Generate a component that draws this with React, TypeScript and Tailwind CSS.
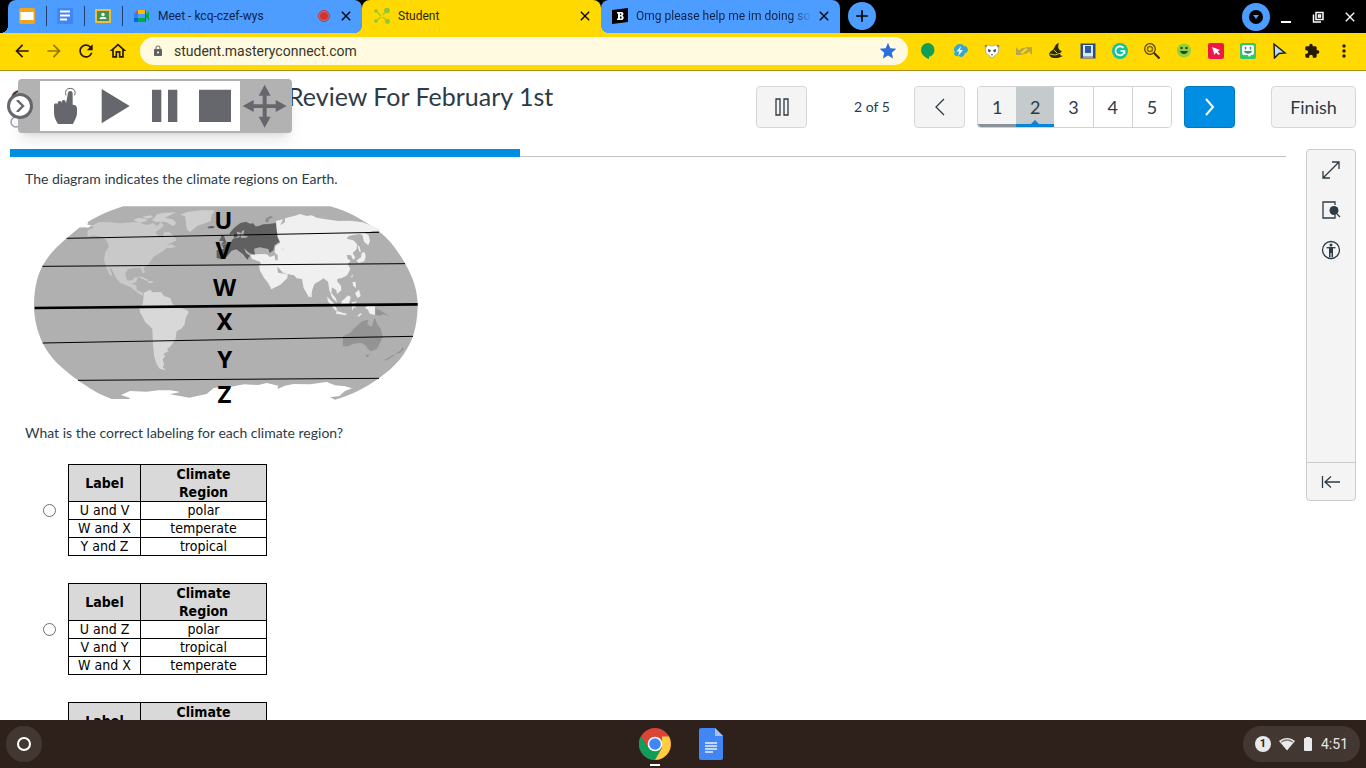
import React from "react";
import {
  MdAdd,
  MdArrowBack,
  MdArrowForward,
  MdClose,
  MdExtension,
  MdLock,
  MdMoreVert,
  MdOutlineHome,
  MdRefresh,
  MdStar,
} from "react-icons/md";

const DocLines = () => (
  <svg viewBox="0 0 16 16" className="size-4">
    <rect width="16" height="16" rx="1" fill="#4285f4" />
    <path d="M3 3.500h10M3 7.500h10M3 11.500h7" stroke="#fff" strokeWidth="2" />
  </svg>
);

const SlidesIcon = () => (
  <svg viewBox="0 0 16 16" className="size-4">
    <rect width="16" height="16" rx="2" fill="#f0a51e" />
    <rect x="1.500" y="4" width="13" height="8" fill="#fff" />
  </svg>
);

const ClassroomIcon = () => (
  <svg viewBox="0 0 16 16" className="size-4">
    <rect y="1" width="16" height="14" rx="1" fill="#f0bd3c" />
    <rect x="2" y="3" width="12" height="10" fill="#3f9455" />
    <circle cx="8" cy="6.500" r="1.700" fill="#fff" />
    <path d="M4.500 11c0-3 7-3 7 0z" fill="#fff" />
  </svg>
);

const MeetIcon = () => (
  <svg viewBox="0 0 16 16" className="size-4">
    <path d="M0 6l4-4v4z" fill="#ea4335" />
    <path d="M4 2h7v4H4z" fill="#fbbc04" />
    <path d="M0 6h4v4H0z" fill="#2684fc" />
    <path d="M0 10h4v4H1a1 1 0 0 1-1-1z" fill="#0066da" />
    <path d="M4 10h7v4H4zM11 8l4-5v10z" fill="#00ac47" />
    <path d="M11 2v12l1-1V3z" fill="#00832d" />
  </svg>
);

const MasteryIcon = () => (
  <svg viewBox="0 0 16 16" className="size-4">
    <path d="M3 4l4 4M12 3L9 7M3 12l4-3M9 9l4 4" stroke="#a9cb1f" strokeWidth="1.500" />
    <g fill="#8cc63f">
      <circle cx="2" cy="3" r="1.800" />
      <circle cx="13" cy="2.500" r="2.800" />
      <circle cx="2" cy="13" r="1.800" />
      <circle cx="13.500" cy="13.500" r="2.400" />
    </g>
  </svg>
);

const BrainlyIcon = () => (
  <svg viewBox="0 0 16 16" className="size-4">
    <path d="M0 2l16-2v14L0 16z" fill="#000" />
    <path
      d="M5 4h4.500c2.500 0 2.500 3.200.7 3.700 2.300.5 2 4.300-.9 4.300H5v-1.500h1v-5H5zM8 5.500v1.600h1.200V5.500zM8 8.500v2h1.500v-2z"
      fill="#fff"
      fillRule="evenodd"
    />
  </svg>
);

const extensions: { name: string; icon: React.ReactNode }[] = [
  {
    name: "Hangouts",
    icon: <path d="M8 0a7 7 0 0 1 1 13.800V16c-3-1-8-4-8-9a7 7 0 0 1 7-7z" fill="#0f9d58" />,
  },
  {
    name: "Flash",
    icon: (
      <>
        <path d="M4 3c2-3 7-2 8 0 5 0 5 7 1 7-1 4-4 5-6 3-4 1-6-2-4-4-2-2-1-5 1-6z" fill="#2fa8d5" />
        <path d="M9 3L4.500 8.500h3L6 13l5-6H8z" fill="#fff" />
      </>
    ),
  },
  {
    name: "Panda",
    icon: (
      <>
        <path d="M1 3l3-1 4 1 4-1 3 1-1 7-6 5-6-5z" fill="#fff" stroke="#999" strokeWidth=".7" />
        <path d="M1 2l2 .5L2 5zM15 2l-2 .5L14 5zM4 6l3 1-1 2.500-2-1zM12 6L9 7l1 2.500 2-1zM7 11h2l-1 2z" fill="#555" />
      </>
    ),
  },
  {
    name: "Swap",
    icon: <path d="M0 4v8h7l-2.500-2.500L10 5H6L3 7.500zM16 12V4H9l2.500 2.500L6 11h4l3-2.500z" fill="#b9a84a" />,
  },
  {
    name: "Squirrel",
    icon: (
      <>
        <path d="M11 0C5 2 8 6 3 8c-3 2-2 7 3 7h4l5-2c-4 0-3-3-1-5-3 0-5-4-3-8z" fill="#252b16" />
        <path d="M2 11l5 1 6-2M6 7l3 3" stroke="#d4bf22" fill="none" />
      </>
    ),
  },
  {
    name: "Reader",
    icon: (
      <>
        <rect x=".5" y=".5" width="15" height="15" fill="#2c4c85" />
        <rect x="3" y="2" width="10" height="11" fill="#d9e7f5" />
        <rect x="5" y="3" width="6" height="7" fill="#2d5ca0" />
        <path d="M3 14h10" stroke="#fff" />
      </>
    ),
  },
  {
    name: "Grammarly",
    icon: (
      <>
        <circle cx="8" cy="8" r="8" fill="#15c39a" />
        <path d="M11.500 5A4.500 4.500 0 1 0 12.500 8H8.500M12.500 8v3" stroke="#fff" strokeWidth="1.600" fill="none" />
      </>
    ),
  },
  {
    name: "Magnifier",
    icon: (
      <>
        <circle cx="6" cy="6" r="5.300" stroke="#51401a" fill="none" strokeWidth="1.200" />
        <circle cx="6" cy="6" r="2.500" stroke="#8c6b16" fill="none" strokeWidth="1.500" />
        <path d="M10 10l5.500 5.500" stroke="#3c2419" strokeWidth="2" />
      </>
    ),
  },
  {
    name: "Smile",
    icon: (
      <>
        <circle cx="8" cy="7.500" r="7" fill="#8fd142" />
        <circle cx="5.500" cy="5" r="1.200" fill="#29441e" />
        <circle cx="10.500" cy="5" r="1.200" fill="#29441e" />
        <path d="M4 8h8c-1 4-7 4-8 0z" fill="#29441e" />
      </>
    ),
  },
  {
    name: "Cursor",
    icon: (
      <>
        <rect width="16" height="16" rx="2" fill="#ed1846" />
        <path d="M4 4l8 3-2.500 1.200L12 11l-1.500 1L8 9.500 6.500 12z" fill="#fff" />
      </>
    ),
  },
  {
    name: "Bitmoji",
    icon: (
      <>
        <rect width="16" height="16" rx="2" fill="#35c66b" />
        <path d="M4 2h8q2 0 2 2v6q0 2-2 2h-1l-2 2-1-2H4q-2 0-2-2V4q0-2 2-2z" fill="#fff" />
        <path d="M5.500 4v2.500M10.500 4v2.500" stroke="#2c9a63" strokeWidth="1.500" />
        <path d="M4 8h8c-1 3.500-7 3.500-8 0z" fill="#2c9a63" />
      </>
    ),
  },
  {
    name: "Pointer",
    icon: <path d="M2 1l11 9-6 .5L2.500 15z" fill="#b6e1ee" stroke="#2a201a" strokeWidth="1.500" />,
  },
];

const labelBox = "flex items-center pb-px text-xs text-[#102347]";

const TabStrip = () => (
  <div className="flex h-[33px] shrink-0 items-stretch bg-black pl-2">
    <div className="relative flex w-[354px] rounded-t-lg bg-[#4c9dff] before:absolute before:bottom-0 before:-left-2 before:size-2 before:bg-[radial-gradient(circle_at_0_0,transparent_8px,#4c9dff_8px)]">
      {[<SlidesIcon />, <DocLines />, <ClassroomIcon />].map((icon, i) => (
        <button
          key={i}
          aria-label={["Slides", "Docs", "Classroom"][i]}
          className="flex w-[38px] items-center justify-center pb-px"
        >
          {icon}
          <span className="absolute h-5 w-px translate-x-[19px] bg-[#1f3f6b]" />
        </button>
      ))}
      <div className={`${labelBox} flex-1 pr-2 pl-3`}>
        <MeetIcon />
        <span className="ml-2 flex-1 whitespace-nowrap">Meet - kcq-czef-wys</span>
        <span className="mr-2 flex size-3 items-center justify-center rounded-full border border-[#d93025] bg-[#8f7fb5]">
          <span className="size-2 rounded-full bg-[#d93025]" />
        </span>
        <button aria-label="Close Meet">
          <MdClose className="size-4 text-black" />
        </button>
      </div>
    </div>
    <div className="relative z-10 flex w-[239px] items-center rounded-t-lg bg-[#ffd900] pr-2 pb-px pl-3 text-xs text-[#2c2410] before:absolute before:bottom-0 before:-left-2 before:size-2 before:bg-[radial-gradient(circle_at_0_0,transparent_8px,#ffd900_8px)] after:absolute after:-right-2 after:bottom-0 after:size-2 after:bg-[radial-gradient(circle_at_100%_0,transparent_8px,#ffd900_8px)]">
      <MasteryIcon />
      <span className="ml-2 flex-1">Student</span>
      <button aria-label="Close Student">
        <MdClose className="size-4 text-black" />
      </button>
    </div>
    <div className={`${labelBox} w-[239px] rounded-t-lg bg-[#4c9dff] pr-2 pl-[11px]`}>
      <BrainlyIcon />
      <span className="ml-2 w-44 overflow-hidden bg-[linear-gradient(90deg,#102347_88%,transparent)] bg-clip-text whitespace-nowrap text-transparent">
        Omg please help me im doing so
      </span>
      <button aria-label="Close Omg please help me" className="ml-auto">
        <MdClose className="size-4 text-black" />
      </button>
    </div>
    <button
      aria-label="New tab"
      className="mt-[2px] ml-2 flex size-7 items-center justify-center rounded-full bg-[#4c9dff]"
    >
      <MdAdd className="size-5 text-black" />
    </button>
    <div className="ml-auto flex items-center gap-4 pr-2 text-white">
      <button
        aria-label="Search tabs"
        className="-mr-2 flex size-7 items-center justify-center rounded-full bg-[#4c9dff]"
      >
        <svg viewBox="0 0 16 16" className="size-4">
          <circle cx="8" cy="8" r="7" />
          <path d="M5 6h6l-3 4z" fill="#4c9dff" />
        </svg>
      </button>
      <button aria-label="Minimize">
        <svg viewBox="0 0 16 16" className="size-4">
          <path d="M3 13h10" stroke="#fff" strokeWidth="2" />
        </svg>
      </button>
      <button aria-label="Restore">
        <svg viewBox="0 0 16 16" className="size-4" fill="none" stroke="#fff" strokeWidth="1.500">
          <path d="M6 3.500h7v7H6zM3.500 5.500v7.500H11M8.500 6h2v2h-2z" />
        </svg>
      </button>
      <button aria-label="Close window">
        <MdClose className="size-4" />
      </button>
    </div>
  </div>
);

const AddressBar = () => (
  <div className="flex h-[38px] shrink-0 items-center border-b border-[#a89120] bg-[#ffd900] px-3 pb-px text-[#261a05]">
    <div className="flex gap-3 pr-3">
      <button aria-label="Back"><MdArrowBack className="size-5" /></button>
      <button aria-label="Forward"><MdArrowForward className="size-5 opacity-50" /></button>
      <button aria-label="Reload"><MdRefresh className="size-5" /></button>
      <button aria-label="Home"><MdOutlineHome className="size-5" /></button>
    </div>
    <div className="flex h-7 flex-1 items-center rounded-full bg-[#fffae0] pr-2.5 pl-3">
      <MdLock className="size-3 text-[#5f6368]" />
      <input
        aria-label="Address"
        defaultValue="student.masteryconnect.com"
        className="ml-2.5 flex-1 bg-transparent text-sm text-[#3a3525] outline-none"
      />
      <button aria-label="Bookmark"><MdStar className="size-5 text-[#2a6fdb]" /></button>
    </div>
    <div className="flex items-center gap-4 pl-3">
      {extensions.map((ext) => (
        <button key={ext.name} aria-label={ext.name}>
          <svg viewBox="0 0 16 16" className="size-4">{ext.icon}</svg>
        </button>
      ))}
      <button aria-label="Extensions"><MdExtension className="size-4" /></button>
      <button aria-label="Menu" className="-ml-0.5"><MdMoreVert className="size-5" /></button>
    </div>
  </div>
);

const SpeechToolbar = () => (
  <div className="absolute top-2 left-[18px] z-20 flex h-[54px] rounded bg-[#b2b2b2] py-[2px] text-[#66676d] shadow-lg">
    <button
      aria-label="Collapse toolbar"
      className="absolute top-[14px] -left-[11px] flex size-[26px] items-center justify-center rounded-full border-[3px] border-[#66676d] bg-white"
    >
      <svg viewBox="0 0 12 12" className="size-3" fill="none" stroke="currentColor" strokeWidth="2.400">
        <path d="M3 0l6 6-6 6" />
      </svg>
    </button>
    <div className="ml-[22px] flex items-center bg-white">
      <button aria-label="Click to speak">
        <svg viewBox="120 33 150 150" className="size-[50px]" fill="currentColor">
          <path d="M204 70q0-7 7-7t7 7v34q13 0 13 12v10c0 16-6 22-12 36h-45c-7-12-12-22-12-34v-22q0-6 6-6t5 5v-5q0-7 6-7t6 7v-3q0-7 6-7t6 6l1 4z" />
          <path
            d="M198 76q-6-20 13-21 19 1 13 21"
            fill="none"
            stroke="currentColor"
            strokeWidth="3"
          />
        </svg>
      </button>
      <button aria-label="Play">
        <svg viewBox="270 33 150 150" className="size-[50px]" fill="currentColor">
          <path d="M305 57l84 51-84 52z" />
        </svg>
      </button>
      <button aria-label="Pause speech">
        <svg viewBox="420 33 150 150" className="size-[50px]" fill="currentColor">
          <path d="M456 59h28v97h-28zM504 59h28v97h-28z" />
        </svg>
      </button>
      <button aria-label="Stop">
        <svg viewBox="570 33 150 150" className="size-[50px]" fill="currentColor">
          <path d="M597 59h96v97h-96z" />
        </svg>
      </button>
    </div>
    <button aria-label="Move toolbar">
      <svg viewBox="720 33 156 150" className="h-[50px] w-[52px]" fill="currentColor">
        <path d="M794 44l18 33h-12v26h27V90l33 18-33 18v-12h-27v26h12l-18 33-18-33h12v-26h-27v12l-33-18 33-18v13h27V77h-12z" />
      </svg>
    </button>
  </div>
);

const navButton =
  "flex h-[42px] w-[51px] items-center justify-center rounded border border-[#d5d7d9] bg-[#f4f4f4]";

const TestHeader = () => (
  <header className="flex h-[78px] items-start px-2.5 pt-[15px] text-[#2d3b45]">
    <div className="w-[278px] text-[25px] leading-6">
      G
      <svg viewBox="0 0 12 12" className="mt-1.5 size-3" fill="none" stroke="#9aa3a9" strokeWidth="1.500">
        <circle cx="6" cy="6" r="5" />
      </svg>
    </div>
    <h1 className="-mt-0.5 text-[25px] leading-6">Review For February 1st</h1>
    <div className="ml-auto flex items-center">
      <button aria-label="Pause test" className={navButton}>
        <svg viewBox="0 0 14 18" className="h-[18px] w-3.5" fill="none" stroke="currentColor" strokeWidth="1.300">
          <path d="M1 1h4v16H1zM9 1h4v16H9z" />
        </svg>
      </button>
      <span className="w-[107px] pl-[47px] text-sm whitespace-nowrap">2 of 5</span>
      <button aria-label="Previous question" className={navButton}>
        <svg viewBox="0 0 10 18" className="h-[18px] w-2.5" fill="none" stroke="currentColor" strokeWidth="1.300">
          <path d="M9 1L1 9l8 8" />
        </svg>
      </button>
      <nav className="ml-3 flex h-[42px] w-[195px] overflow-hidden rounded border border-[#d0d3d6] text-lg">
        {[1, 2, 3, 4, 5].map((n) => (
          <button
            key={n}
            className={
              n === 1
                ? "flex-1 border-b-[3px] border-[#8b929b] bg-[#f4f4f4] pt-[2px]"
                : n === 2
                  ? "relative flex-1 border-b-[3px] border-[#0a84d6] bg-[#c5cacd] pt-[2px]"
                  : "flex-1 border-r border-[#d0d3d6] bg-white last:border-r-0"
            }
          >
            {n}
            {n === 2 && (
              <svg viewBox="0 0 8 4" className="absolute bottom-0 left-[15px] h-1 w-2">
                <path d="M0 4l4-4 4 4z" fill="#0a84d6" />
              </svg>
            )}
          </button>
        ))}
      </nav>
      <button
        aria-label="Next question"
        className="ml-3 flex h-[42px] w-[51px] items-center justify-center rounded border border-[#0079c4] bg-[#008ee2] text-white"
      >
        <svg viewBox="0 0 10 18" className="h-[18px] w-2.5" fill="none" stroke="currentColor" strokeWidth="2">
          <path d="M1 1l7 8-7 8" />
        </svg>
      </button>
      <button className="ml-9 h-[42px] w-[85px] rounded border border-[#d5d7d9] bg-[#f4f4f4] text-lg">
        Finish
      </button>
    </div>
  </header>
);

const mapLabels = [
  { text: "U", x: 610, y: 102 },
  { text: "V", x: 610, y: 192 },
  { text: "W", x: 614, y: 303 },
  { text: "X", x: 614, y: 404 },
  { text: "Y", x: 614, y: 518 },
  { text: "Z", x: 613, y: 623 },
];

const WorldMap = () => (
  <svg viewBox="15 9 1200 636" className="w-[400px] max-w-full" role="img" aria-label="Climate regions">
    {/* ocean, cut away along the Antarctic coast */}
    <path
      d="M310 34H930C985 48 1030 76 1076 108C1110 134 1135 170 1155 205C1180 250 1192 285 1193 328C1193 365 1188 395 1179 424C1158 480 1125 515 1077 550C1035 580 990 602 945 614L930 607 958 603 975 588 996 580 975 574 945 571 920 561 870 568 820 567 795 572 772 582 775 572 740 564 715 570 672 568 630 576 605 576 580 580 560 597 535 602 508 608 480 603 450 598 478 592 470 580 455 575 466 558 472 572 483 580 478 590 450 586 415 586 380 590 330 588 303 600 328 608 330 612H275C235 598 205 578 174 556C125 520 90 490 68 444C50 405 43 370 42 335C42 292 48 250 67 214C85 180 110 155 140 130C160 112 175 100 198 84C235 62 270 46 310 34Z"
      fill="#b0b0b0"
    />
    <path d="M180 98L190 88 205 80 202 89 215 91 205 98 190 97z" fill="#fff" />
    {/* North America, Arctic islands and Greenland */}
    <path
      d="M203 106L222 98 213 93 238 81 270 82 300 85 350 81 382 90 400 84 410 94 422 82 432 91 420 102 406 112 415 124 428 128 432 112 448 111 466 128 470 137 452 144 440 150 455 148 468 155 452 160 440 158 427 170 412 178 398 188 390 202 378 214 370 220 375 232 368 235 362 218 340 219 323 223 315 238 322 256 337 256 344 247 354 247 348 261 335 266 349 271 350 285 369 293 368 303 343 286 332 277 300 263 287 247 275 222 268 217 277 243 269 240 258 216 252 195 256 171 267 153 258 134 245 125 220 121 202 125z"
      fill="#c9c9c9"
    />
    <path
      d="M495 63L480 60 502 51 540 46 585 46 575 61 572 78 552 86 532 92 510 112 500 101zM340 75l15-7 22 3 5 7-24 5zM367 65l25-4 8 5-19 5zM400 72l12-15 22-4 35-1-17 8-18 8 23 5 12 10-8 11-25-14-19 1-8-5zM395 74l15-7 14 6-15 9z"
      fill="#cecece"
    />
    <path d="M353 244l15 3 16 8-2 3-18-8zM385 258l16 1-5 4h-12z" fill="#d2d2d2" />
    {/* South America */}
    <path
      d="M372 293L382 288 391 284 397 292 423 291 432 303 451 309 458 328 475 337 501 345 506 352 497 368 494 388 486 400 470 409 466 434 449 457 441 461 446 468 431 476 435 484 428 493 432 506 429 517 438 526 420 522 410 508 403 486 399 451 397 401 376 382 360 351 358 339 368 328z"
      fill="#d8d8d8"
    />
    {/* Europe */}
    <path
      d="M630 113L642 99 661 84 678 80 690 86 700 85 706 94 714 94 730 88 747 87 768 84 770 107 774 128 781 139 764 150 760 166 749 174 745 162 719 157 702 161 705 180 688 174 672 160 678 174 690 182 682 194 669 178 649 163 635 167 620 185 603 193 590 189 590 166 611 162 606 150 631 144 639 131 658 127 663 113 651 110 652 125 643 130 640 116 629 119zM597 137L604 126 600 120 612 122 620 145 602 150 611 138zM589 145l8-3 3 8-10 5zM562 96l13-3 10 2-6 5h-14z"
      fill="#606060"
    />
    <path d="M661 119l6-12 6-2-3 16 14 2-5 5-16 1z" fill="#b0b0b0" />
    {/* Asia */}
    <path
      d="M768 78L790 73 780 91 795 82 795 70 825 62 840 57 860 63 875 61 890 68 913 72 955 78 990 77 1028 82 1058 94 1076 101 1084 107 1060 108 1035 114 1045 119 1050 137 1045 151 1032 140 1027 120 1018 117 1001 120 986 123 980 131 1000 136 1011 147 1010 162 998 174 1006 188 999 194 993 181 980 180 983 191 992 198 983 207 991 221 982 240 968 248 952 252 952 260 963 272 964 286 951 297 949 286 936 277 934 293 947 309 952 323 937 309 928 286 924 260 911 250 897 259 883 267 876 288 874 303 867 307 851 279 846 252 830 250 822 241 802 237 789 233 777 220 772 216 774 233 803 238 802 249 781 269 754 283 745 265 732 248 720 227 717 212 723 207 720 200 696 192 691 180 720 177 740 178 750 186 764 181 766 196 773 196 773 180 764 173 766 153 781 143 773 127z"
      fill="#f0f0f0"
    />
    <path d="M745 84l-10-5 3-9 14-7 8 3-14 7z" fill="#8a8a8a" />
    {/* Japan and the south-east Asian islands */}
    <path
      d="M1017 204l-8-7 14-10 2-14 10-1 2 14-4 13zM1012 151l6 3 5 17-5-1zM993 248l4-12 1 9zM997 262l10-2 1 19-8-6zM1005 294l12-10 5 19-9 6zM966 318l19-17 7 5-5 20-16 8-8-9zM921 305l20 19 12 23-8-1-21-27zM950 348l29 8v5l-31-5zM995 322l17-3-10 9 8 12-8-3-6 10zM1012 363l9-8 5 2-10 8zM1045 330l20 3v27l-16-4-5-12-9-5z"
      fill="#f0f0f0"
    />
    <path d="M870 292l6 7v8l-6-3zM780 164l8-6 7 3-5 7z" fill="#e5e5e5" />
    {/* Australia, New Guinea and New Zealand */}
    <path
      d="M969 424L991 413 1003 399 1013 391 1026 379 1045 374 1042 388 1055 395 1064 367 1073 390 1083 403 1088 425 1081 442 1071 462 1053 469 1043 462 1038 452 1022 443 998 447 986 454 968 454zM1035 479h15l-8 8zM1066 340l15 6 10 7 20 10-22-5-9 4-14-2zM1143 465l3-7 7 3-12 12-17 5zM1093 495l26-15 8-1-30 18z"
      fill="#949494"
    />
    <g stroke="#000" strokeWidth="3">
      <path d="M140 130L1077 112" />
      <path d="M67 214L1155 206" />
      <path d="M44 339L1193 328" strokeWidth="8" />
      <path d="M68 444L1179 424" />
      <path d="M174 556L1077 550" />
    </g>
    {mapLabels.map((l) => (
      <text
        key={l.text}
        x={l.x}
        y={l.y}
        textAnchor="middle"
        className="font-['Noto_Sans',sans-serif] text-[72px] font-bold"
      >
        {l.text}
      </text>
    ))}
  </svg>
);

const options = [
  [
    ["U and V", "polar"],
    ["W and X", "temperate"],
    ["Y and Z", "tropical"],
  ],
  [
    ["U and Z", "polar"],
    ["V and Y", "tropical"],
    ["W and X", "temperate"],
  ],
  [
    ["U and Z", "tropical"],
    ["V and Y", "temperate"],
    ["W and X", "polar"],
  ],
];

const Option = ({ rows, index }: { rows: string[][]; index: number }) => (
  <label className="flex items-center gap-3">
    <input
      type="radio"
      name="answer"
      aria-label={`Option ${index + 1}`}
      className="size-[13px] appearance-none rounded-full border border-[#6f6f6f] bg-white checked:border-4"
    />
    <table className="w-[199px] table-fixed border-collapse bg-white text-center font-['DejaVu_Sans_Condensed','DejaVu_Sans',sans-serif] text-sm leading-[17px] text-black">
      <thead>
        <tr className="bg-[#d9d9d9] leading-[18px]">
          <th className="w-[72px] border border-black p-0">Label</th>
          <th className="border border-black px-6 py-0">Climate Region</th>
        </tr>
      </thead>
      <tbody>
        {rows.map(([label, region]) => (
          <tr key={label}>
            <td className="border border-black p-0">{label}</td>
            <td className="border border-black p-0">{region}</td>
          </tr>
        ))}
      </tbody>
    </table>
  </label>
);

const ToolPanel = () => (
  <aside className="mr-2.5 flex h-[352px] w-[50px] shrink-0 flex-col items-center rounded border border-[#c7cdd1] bg-[#f4f4f4] text-[#2d3b45]">
    <div className="flex flex-1 flex-col gap-5 pt-2.5">
      <button aria-label="Full screen">
        <svg viewBox="0 0 20 20" className="size-5" fill="none" stroke="currentColor" strokeWidth="1.300">
          <path d="M2 18L18 2M11 2h7v7M2 11v7h7" />
        </svg>
      </button>
      <button aria-label="Zoom">
        <svg viewBox="0 0 20 20" className="size-5" fill="none" stroke="currentColor" strokeWidth="1.300">
          <path d="M14 5V2H2v16h12v-3M16 14l3 3" />
          <circle cx="13" cy="10.500" r="4.500" fill="currentColor" stroke="none" />
        </svg>
      </button>
      <button aria-label="Accessibility">
        <svg viewBox="0 0 20 20" className="size-5" fill="none" stroke="currentColor" strokeWidth="1.300">
          <circle cx="10" cy="10" r="8.500" />
          <circle cx="10" cy="5" r="1.500" fill="currentColor" stroke="none" />
          <path d="M5.500 7.700h9" />
          <path d="M8 7.500h4V17h-1.500v-4h-1v4H8z" fill="currentColor" stroke="none" />
        </svg>
      </button>
    </div>
    <button
      aria-label="Collapse panel"
      className="flex h-[38px] w-full items-center justify-center border-t border-[#c7cdd1]"
    >
      <svg viewBox="0 0 20 14" className="h-3.5 w-5" fill="none" stroke="currentColor" strokeWidth="1.300">
        <path d="M1.500 1v12M19 7H4M10 1.500L4 7l6 5.500" />
      </svg>
    </button>
  </aside>
);

const Shelf = () => (
  <footer className="relative z-20 flex h-12 shrink-0 items-center justify-between bg-[#2e211b] px-1.5 font-[Roboto,sans-serif]">
    <div className="flex flex-1">
      <button
        aria-label="Launcher"
        className="flex size-9 items-center justify-center rounded-full bg-[#433731]"
      >
        <span className="size-3.5 rounded-full border-2 border-white" />
      </button>
    </div>
    <div className="flex items-center gap-6">
      <button aria-label="Chrome" className="relative">
        <svg viewBox="0 0 32 32" className="size-8">
          <circle cx="16" cy="16" r="16" fill="#db4437" />
          <path d="M2.100 8A16 16 0 0 0 16 32l7-12-7-4-7 4z" fill="#109d58" />
          <path d="M30 8.500A16 16 0 0 1 16 32l7-12V8.500z" fill="#ffcd40" />
          <circle cx="16" cy="16" r="7.300" fill="#fff" />
          <circle cx="16" cy="16" r="5.800" fill="#4285f4" />
        </svg>
        <span className="absolute -bottom-[6px] left-[11px] h-[2px] w-2.5 bg-white" />
      </button>
      <button aria-label="Docs">
        <svg viewBox="0 0 32 32" className="size-8">
          <path d="M6 0h14l8 8v22a2 2 0 0 1-2 2H6a2 2 0 0 1-2-2V2a2 2 0 0 1 2-2z" fill="#4285f4" />
          <path d="M20 0l8 8h-8z" fill="#a1c2fa" />
          <path d="M10 15h12M10 18h12M10 21h12M10 24h8" stroke="#f1f1f1" strokeWidth="1.500" />
        </svg>
      </button>
    </div>
    <div className="flex flex-1 justify-end">
      <button className="flex h-9 items-center gap-2 rounded-full bg-[#433731] px-3 text-sm text-[#e8e6e5]">
        <span className="flex size-4 items-center justify-center rounded-full bg-[#e8eaed] text-[11px] font-bold text-[#2e211b]">
          1
        </span>
        <svg viewBox="0 0 16 14" className="h-3.5 w-4">
          <path d="M8 13.500L0 4c5-4 11-4 16 0z" fill="#e8eaed" />
          <path d="M2.200 5c3.600-2.500 8-2.500 11.600 0" stroke="#7d746f" strokeWidth="1.400" fill="none" />
        </svg>
        <svg viewBox="3 0 10 16" className="h-4 w-2.5 shrink-0" fill="#e8eaed">
          <path d="M4 3q0-1 1-1h1V1h4v1h1q1 0 1 1v11q0 1-1 1H5q-1 0-1-1z" />
        </svg>
        4:51
      </button>
    </div>
  </footer>
);

const App: React.FC = () => {
  return (
    <div className="flex h-screen flex-col overflow-hidden bg-white font-[Roboto,sans-serif]">
      <TabStrip />
      <AddressBar />
      <div className="relative flex min-h-0 flex-1 flex-col font-[Lato,sans-serif]">
        <SpeechToolbar />
        <TestHeader />
        <div className="flex min-h-0 flex-1 items-start">
          <main className="mr-5 ml-2.5 h-full min-w-0 flex-1 overflow-y-auto [scrollbar-width:none]">
            <div className="h-2 border-b border-[#c0c3c6]">
              <div className="h-2 w-2/5 bg-[#008ee2]" />
            </div>
            <div className="px-[15px] text-[#2d3b45]">
              <p className="mt-3 text-sm leading-5">
                The diagram indicates the climate regions on Earth.
              </p>
              <div className="mt-[9px]">
                <WorldMap />
              </div>
              <p className="mt-[13px] text-sm leading-5">
                What is the correct labeling for each climate region?
              </p>
              <div className="mt-[21px] ml-[18px] flex flex-col gap-[27px]">
                {options.map((rows, i) => (
                  <Option key={i} rows={rows} index={i} />
                ))}
              </div>
            </div>
          </main>
          <ToolPanel />
        </div>
      </div>
      <Shelf />
    </div>
  );
};

export default App;
